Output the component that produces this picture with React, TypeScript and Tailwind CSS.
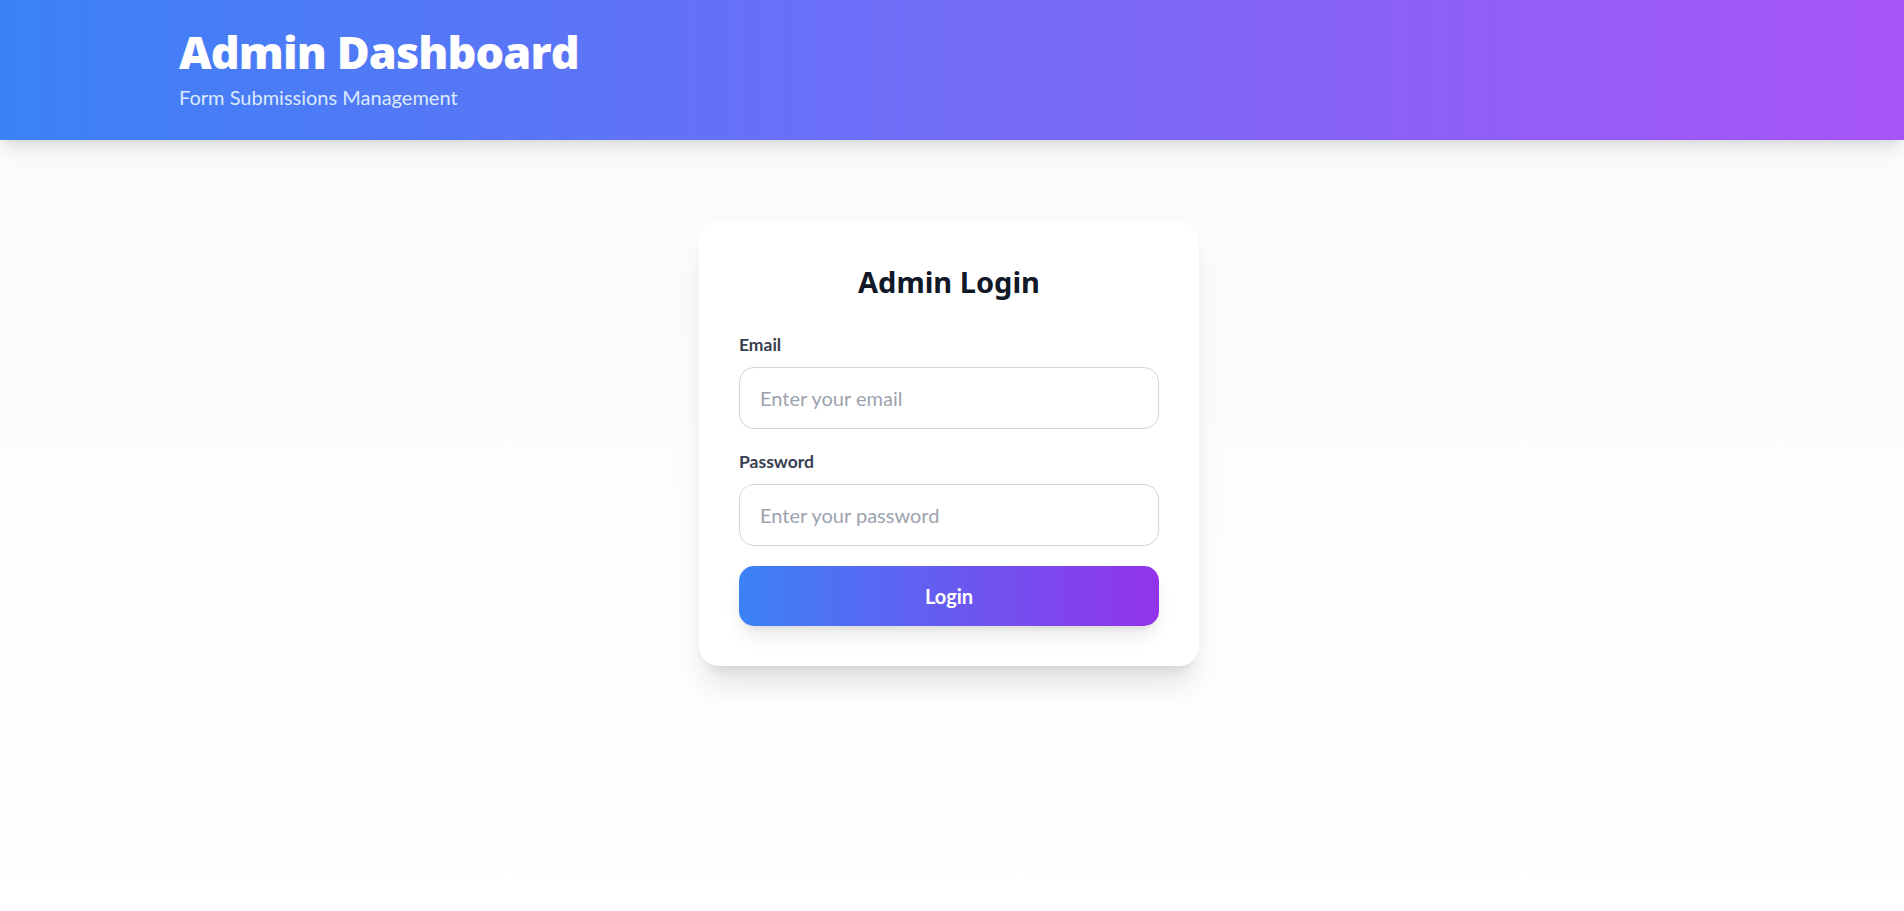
import React from 'react';

const font = "font-['Lato',_'Noto_Sans',_sans-serif]";

function Header() {
  return (
    <header className="h-[140px] bg-[linear-gradient(to_right,#3b82f6,#a855f7)] shadow-[0_12px_19px_-4px_rgba(0,0,0,0.1),0_5px_8px_-5px_rgba(0,0,0,0.1)] relative z-10">
      <div className="pl-[179px] pt-[27px]">
        <h1 className="font-['Open_Sans',_'Noto_Sans',_sans-serif] text-[45px] leading-[50px] font-extrabold tracking-[-0.9px] text-white">
          Admin Dashboard
        </h1>
        <p className="mt-[5px] text-[20px] leading-[30px] text-[#dbeafe]">Form Submissions Management</p>
      </div>
    </header>
  );
}

function Field({ label, type, placeholder }: { label: string; type: string; placeholder: string }) {
  return (
    <div>
      <label className="block mb-[10px] text-[17.5px] leading-[25px] font-bold text-[#374151]">{label}</label>
      <input
        type={type}
        placeholder={placeholder}
        className="block w-full h-[62px] px-[20px] border border-[#d1d5db] rounded-[15px] bg-white text-[20px] text-[#111827] placeholder:text-[#9ca3af] outline-none"
      />
    </div>
  );
}

export default function App() {
  return (
    <div className={`min-h-screen bg-[linear-gradient(to_bottom,#f9fafb,#ffffff)] ${font}`}>
      <Header />
      <main className="flex justify-center pt-[82px] pb-10 pr-[6px]">
        <div className="w-[500px] bg-white rounded-[20px] p-[40px] shadow-[0_25px_31px_-6px_rgba(0,0,0,0.1),0_10px_12px_-7px_rgba(0,0,0,0.1)]">
          <h2 className="font-['Noto_Sans',_sans-serif] text-[29px] leading-[40px] font-bold text-[#111827] text-center mb-[30px]">
            Admin Login
          </h2>
          <form className="flex flex-col gap-[20px]" onSubmit={(e) => e.preventDefault()}>
            <Field label="Email" type="email" placeholder="Enter your email" />
            <Field label="Password" type="password" placeholder="Enter your password" />
            <button
              type="submit"
              className="h-[60px] w-full rounded-[15px] bg-[linear-gradient(to_right,#3b82f6,#9333ea)] text-white text-[20px] font-bold shadow-[0_12px_19px_-4px_rgba(0,0,0,0.1),0_5px_8px_-5px_rgba(0,0,0,0.1)]"
            >
              Login
            </button>
          </form>
        </div>
      </main>
    </div>
  );
}
